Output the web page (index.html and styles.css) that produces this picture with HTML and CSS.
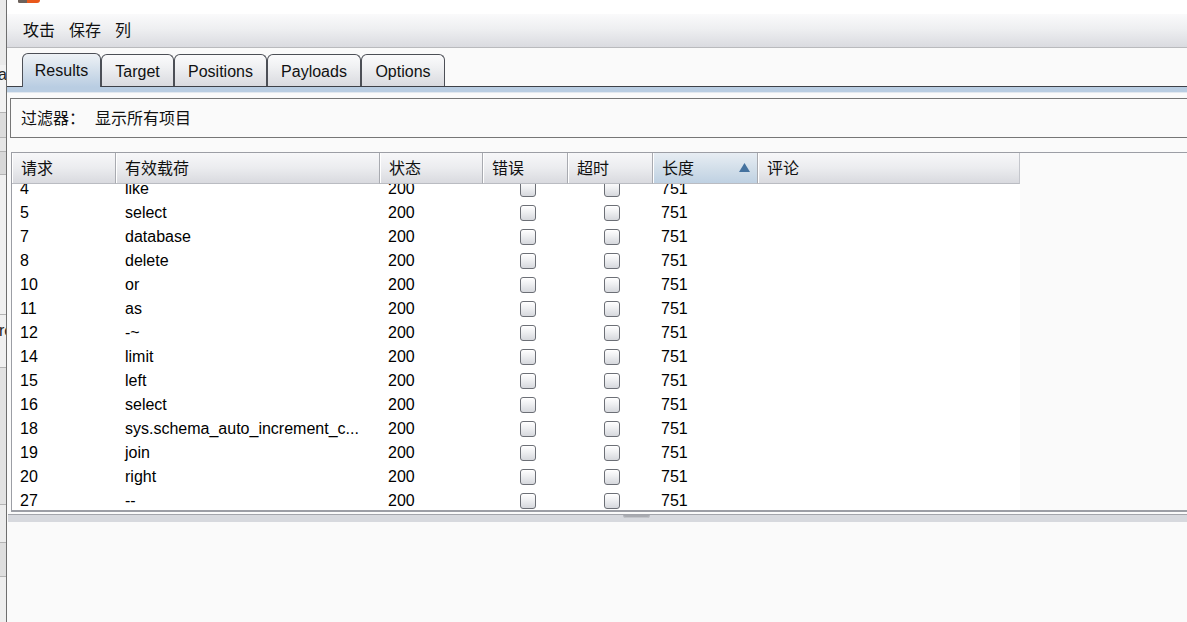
FILE: index.html
```html
<!DOCTYPE html>
<html lang="zh">
<head>
<meta charset="utf-8">
<title>Intruder Results</title>
<link rel="stylesheet" href="styles.css">
</head>
<body>
<div class="screen">
  <div class="bgwin">
    <div class="seg s1"></div>
    <div class="seg s2"><span class="peek">a</span></div>
    <div class="seg s3"></div>
    <div class="seg s4"></div>
    <div class="seg s5"></div>
    <div class="seg s6"></div>
    <div class="seg s7"><span class="peek">rc</span></div>
    <div class="seg s8"></div>
    <div class="seg s9"></div>
    <div class="seg s10"></div>
    <div class="seg s11"></div>
  </div>
  <div class="win">
    <div class="titlebar"><div class="logo"></div></div>
    <div class="menubar">
      <span class="menu-item">攻击</span>
      <span class="menu-item">保存</span>
      <span class="menu-item">列</span>
    </div>
    <div class="tabbar">
      <div class="tab active t-results">Results</div>
      <div class="tab t-target">Target</div>
      <div class="tab t-positions">Positions</div>
      <div class="tab t-payloads">Payloads</div>
      <div class="tab t-options">Options</div>
    </div>
    <div class="tabband"></div>
    <div class="panel">
      <div class="filter"><span class="filter-label">过滤器：</span><span>显示所有项目</span></div>
      <div class="scrollpane">
        <div class="thead">
          <div class="th c1">请求</div>
          <div class="th c2">有效载荷</div>
          <div class="th c3">状态</div>
          <div class="th c4">错误</div>
          <div class="th c5">超时</div>
          <div class="th c6 sorted">长度<svg class="sort" width="11" height="9" viewBox="0 0 11 9"><path d="M5.5 0 L11 9 L0 9 Z" fill="#44729f"/></svg></div>
          <div class="th c7">评论</div>
        </div>
        <div class="tbody">
          <div class="rows">
            <div class="tr"><div class="td c1">4</div><div class="td c2">like</div><div class="td c3">200</div><div class="td c4 chk"><span class="box"></span></div><div class="td c5 chk"><span class="box"></span></div><div class="td c6">751</div><div class="td c7"></div></div>
            <div class="tr"><div class="td c1">5</div><div class="td c2">select</div><div class="td c3">200</div><div class="td c4 chk"><span class="box"></span></div><div class="td c5 chk"><span class="box"></span></div><div class="td c6">751</div><div class="td c7"></div></div>
            <div class="tr"><div class="td c1">7</div><div class="td c2">database</div><div class="td c3">200</div><div class="td c4 chk"><span class="box"></span></div><div class="td c5 chk"><span class="box"></span></div><div class="td c6">751</div><div class="td c7"></div></div>
            <div class="tr"><div class="td c1">8</div><div class="td c2">delete</div><div class="td c3">200</div><div class="td c4 chk"><span class="box"></span></div><div class="td c5 chk"><span class="box"></span></div><div class="td c6">751</div><div class="td c7"></div></div>
            <div class="tr"><div class="td c1">10</div><div class="td c2">or</div><div class="td c3">200</div><div class="td c4 chk"><span class="box"></span></div><div class="td c5 chk"><span class="box"></span></div><div class="td c6">751</div><div class="td c7"></div></div>
            <div class="tr"><div class="td c1">11</div><div class="td c2">as</div><div class="td c3">200</div><div class="td c4 chk"><span class="box"></span></div><div class="td c5 chk"><span class="box"></span></div><div class="td c6">751</div><div class="td c7"></div></div>
            <div class="tr"><div class="td c1">12</div><div class="td c2">-~</div><div class="td c3">200</div><div class="td c4 chk"><span class="box"></span></div><div class="td c5 chk"><span class="box"></span></div><div class="td c6">751</div><div class="td c7"></div></div>
            <div class="tr"><div class="td c1">14</div><div class="td c2">limit</div><div class="td c3">200</div><div class="td c4 chk"><span class="box"></span></div><div class="td c5 chk"><span class="box"></span></div><div class="td c6">751</div><div class="td c7"></div></div>
            <div class="tr"><div class="td c1">15</div><div class="td c2">left</div><div class="td c3">200</div><div class="td c4 chk"><span class="box"></span></div><div class="td c5 chk"><span class="box"></span></div><div class="td c6">751</div><div class="td c7"></div></div>
            <div class="tr"><div class="td c1">16</div><div class="td c2">select</div><div class="td c3">200</div><div class="td c4 chk"><span class="box"></span></div><div class="td c5 chk"><span class="box"></span></div><div class="td c6">751</div><div class="td c7"></div></div>
            <div class="tr"><div class="td c1">18</div><div class="td c2">sys.schema_auto_increment_c...</div><div class="td c3">200</div><div class="td c4 chk"><span class="box"></span></div><div class="td c5 chk"><span class="box"></span></div><div class="td c6">751</div><div class="td c7"></div></div>
            <div class="tr"><div class="td c1">19</div><div class="td c2">join</div><div class="td c3">200</div><div class="td c4 chk"><span class="box"></span></div><div class="td c5 chk"><span class="box"></span></div><div class="td c6">751</div><div class="td c7"></div></div>
            <div class="tr"><div class="td c1">20</div><div class="td c2">right</div><div class="td c3">200</div><div class="td c4 chk"><span class="box"></span></div><div class="td c5 chk"><span class="box"></span></div><div class="td c6">751</div><div class="td c7"></div></div>
            <div class="tr"><div class="td c1">27</div><div class="td c2">--</div><div class="td c3">200</div><div class="td c4 chk"><span class="box"></span></div><div class="td c5 chk"><span class="box"></span></div><div class="td c6">751</div><div class="td c7"></div></div>
          </div>
        </div>
      </div>
      <div class="splitter"><div class="grip"></div></div>
      <div class="lower"></div>
    </div>
  </div>
</div>
</body>
</html>
```

FILE: styles.css
```css
html, body {
  margin: 0;
  padding: 0;
  width: 1187px;
  height: 622px;
  overflow: hidden;
  background: #fafafa;
}

body {
  font-family: "Liberation Sans", Arial, "Noto Sans CJK SC", sans-serif;
  font-size: 16px;
  color: #000;
}

.screen {
  display: flex;
  width: 1187px;
  height: 622px;
}

/* background window peeking on the left */
.bgwin {
  width: 6px;
  flex: none;
  display: flex;
  flex-direction: column;
  background: #e4e4e4;
  border-right: 1px solid #6e6e6e;
  overflow: hidden;
}
.seg {
  box-sizing: border-box;
  border-bottom: 1px solid #b4b4b4;
  overflow: hidden;
  white-space: nowrap;
}
.peek {
  display: block;
  margin-left: -2px;
  line-height: 20px;
  color: #222;
}
.s1 { height: 65px; background: #eaeaea; border-bottom: none; }
.s2 { height: 48px; background: #f2f2f2; }
.s3 { height: 25px; background: #dcdcdc; }
.s4 { height: 14px; background: #e6e6e6; }
.s5 { height: 23px; background: #d8d8d8; }
.s6 { height: 140px; background: #f0f0f0; }
.s7 { height: 53px; background: #f0f0f0; }
.s7 .peek { margin-top: 6px; margin-left: -1px; }
.s8 { height: 137px; background: #e2e2e2; }
.s9 { height: 38px; background: #ececec; }
.s10 { height: 34px; background: #dedede; }
.s11 { flex: 1; background: #eeeeee; border-bottom: none; }

/* main window */
.win {
  flex: 1;
  display: flex;
  flex-direction: column;
  background: #fafafa;
  min-width: 0;
}

.titlebar {
  height: 14px;
  background: #ffffff;
  flex: none;
}
.logo {
  width: 22px;
  height: 3px;
  margin-left: 11px;
  background: linear-gradient(to right, #6d625c 0, #6d625c 40%, #e9581b 40%, #e9581b 100%);
  border-radius: 0 0 7px 3px;
}

.menubar {
  box-sizing: border-box;
  height: 34px;
  flex: none;
  display: flex;
  align-items: center;
  gap: 14px;
  padding: 0 0 3px 16px;
  background: linear-gradient(#fafafb 0%, #eeeff1 45%, #dadbe0 100%);
  border-bottom: 1px solid #b9babd;
  font-family: "Noto Sans CJK SC", sans-serif;
  font-size: 16px;
  color: #111;
}

.tabbar {
  flex: none;
  display: flex;
  align-items: flex-end;
  padding: 5px 0 0 15px;
  gap: 0;
  border-bottom: 1px solid #3e4148;
  background: #fafafa;
}
.tab {
  box-sizing: border-box;
  height: 32px;
  padding-top: 2px;
  border: 1px solid #4c4f56;
  border-bottom: none;
  border-radius: 6px 6px 0 0;
  background: linear-gradient(#fbfbfc 0%, #eff0f2 40%, #d9dadf 100%);
  display: flex;
  align-items: center;
  justify-content: center;
  font-size: 16px;
  color: #111;
}
.tab.active {
  height: 34px;
  padding-top: 1px;
  margin-bottom: -1px;
  background: linear-gradient(#eef2f6 0%, #d6e1ec 45%, #b9cde2 100%);
}
.t-results { width: 79px; }
.t-target { width: 73px; }
.t-positions { width: 93px; }
.t-payloads { width: 94px; }
.t-options { width: 84px; }

.tabband {
  flex: none;
  height: 5px;
  background: #b9cde2;
  border-bottom: 1px solid #e2e8ef;
}

.panel {
  flex: 1;
  display: flex;
  flex-direction: column;
  min-height: 0;
}

.filter {
  box-sizing: border-box;
  height: 40px;
  margin: 5px 0 0 3px;
  border: 1px solid #767676;
  border-right: none;
  padding: 0 0 2px 10px;
  display: flex;
  align-items: center;
  font-family: "Noto Sans CJK SC", sans-serif;
  font-size: 16px;
  color: #111;
  flex: none;
}
.filter-label { margin-right: 10px; }

.scrollpane {
  flex: none;
  margin: 14px 0 0 4px;
  border: 1px solid #9c9ea5;
  border-bottom: 2px solid #9c9ea5;
  border-right: none;
  background: #fafafa;
}

.thead {
  display: flex;
  width: 1008px;
  height: 31px;
}
.th {
  box-sizing: border-box;
  height: 31px;
  display: flex;
  align-items: center;
  padding: 0 0 2px 9px;
  border-right: 1px solid #a8aab0;
  border-bottom: 1px solid #babcc2;
  box-shadow: inset 1px 0 0 #ffffff;
  background: linear-gradient(#f7f7f9 0%, #ebecef 50%, #d9dadf 100%);
  font-family: "Noto Sans CJK SC", sans-serif;
  font-size: 16px;
  color: #111;
}
.th.sorted {
  background: linear-gradient(#e7edf3 0%, #d3dfea 50%, #bfd1e2 100%);
}
.th.c7 { border-right: 1px solid #c4c6cc; }
.sort { margin-left: auto; margin-right: 7px; margin-top: 1px; }

.c1 { width: 104px; }
.c2 { width: 264px; }
.c3 { width: 103px; }
.c4 { width: 85px; }
.c5 { width: 85px; }
.c6 { width: 105px; }
.c7 { width: 262px; }

.tbody {
  height: 326px;
  overflow: hidden;
}
.rows {
  width: 1008px;
  margin-top: -7px;
  background: #ffffff;
}
.tr {
  display: flex;
  height: 24px;
}
.td {
  box-sizing: border-box;
  display: flex;
  align-items: center;
  padding-left: 8px;
  white-space: nowrap;
  overflow: hidden;
  font-size: 16px;
  color: #000;
}
.td.c2 { padding-left: 9px; }
.td.chk { padding-left: 37px; }
.td.c5.chk { padding-left: 36px; }

.box {
  box-sizing: border-box;
  width: 16px;
  height: 16px;
  border: 1px solid #6c6f76;
  border-radius: 3px;
  background: linear-gradient(#ffffff 0%, #f0f1f3 40%, #d6d8dd 100%);
  box-shadow: inset 0 1px 0 #ffffff;
}

.splitter {
  flex: none;
  margin: 2px 0 0 1px;
  height: 7px;
  border-top: 1px solid #a3a5ab;
  background: #d7d9de;
}
.grip {
  width: 27px;
  height: 3px;
  margin-left: 615px;
  border-radius: 0 0 4px 4px;
  background: #a9abb1;
  box-shadow: inset 0 -1px 0 #c3c5ca;
}

.lower {
  flex: 1;
  background: #fafafa;
}
```
